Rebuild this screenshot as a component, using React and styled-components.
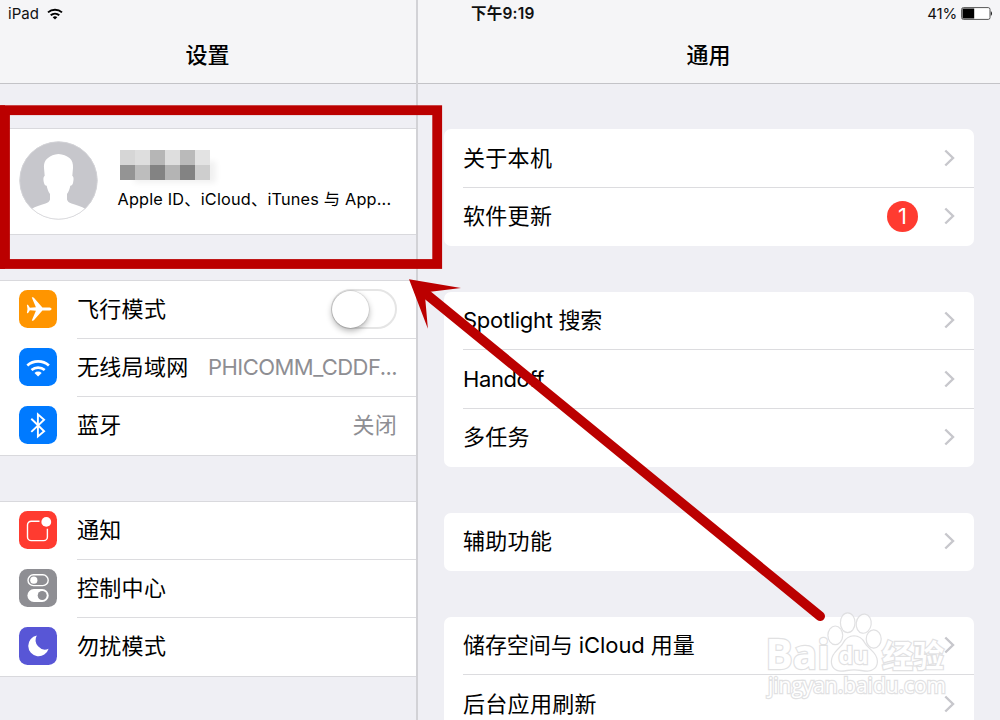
import React from "react";
import styled, { createGlobalStyle } from "styled-components";

const SIDE_GROUPS = [
  [
    { icon: "plane", color: "#ff9500", label: "飞行模式", toggle: true },
    { icon: "wifi", color: "#007aff", label: "无线局域网", value: "PHICOMM_CDDF...", spacing: -0.55 },
    { icon: "bluetooth", color: "#007aff", label: "蓝牙", value: "关闭" },
  ],
  [
    { icon: "notice", color: "#ff3b30", label: "通知" },
    { icon: "control", color: "#8e8e93", label: "控制中心" },
    { icon: "moon", color: "#5856d6", label: "勿扰模式" },
  ],
];

const MAIN_GROUPS = [
  [{ label: "关于本机" }, { label: "软件更新", badge: 1 }],
  [
    { label: "Spotlight 搜索", spacing: -0.3 },
    { label: "Handoff", spacing: -0.4 },
    { label: "多任务" },
  ],
  [{ label: "辅助功能" }],
  [{ label: "储存空间与 iCloud 用量", spacing: -0.07 }, { label: "后台应用刷新" }],
];

const MOSAIC = [
  "#d6d6d6", "#dedede", "#b6b6b6", "#dedede", "#bababa", "#e3e3e3",
  "#949494", "#bdbdbd", "#838383", "#b4b4b4", "#838383", "#cecece",
];

const ICONS = {
  plane: (
    <path
      fill="#fff"
      d="M12.800 7.500c.9-.5 1.700-.3 2.300.5l8.300 9.400 7.200.2c1.200.1 1.900.6 1.900 1.400s-.7 1.300-1.900 1.400l-7.200.2-8.300 9.400c-.6.800-1.400 1-2.300.5l4.100-9.800-6-.4-1.600 2.400c-.3.5-.8.600-1.400.4l.6-4.100-.6-4.100c.6-.2 1.100-.1 1.400.4l1.600 2.400 6-.4z"
    />
  ),
  wifi: (
    <g fill="none" stroke="#fff" strokeWidth="2.7">
      <path d="M8.300 17.400a16.300 16.300 0 0 1 21.600 0" />
      <path d="M12.500 22a10.200 10.200 0 0 1 13.200 0" />
      <path d="M15.500 24.900a5.200 5.200 0 0 1 7.200 0l-3.600 3.500z" fill="#fff" stroke="none" />
    </g>
  ),
  bluetooth: (
    <path
      d="M12.300 12.800l12.800 12.400-6.200 5.200V8.300l6.200 5.400-12.800 12.200"
      fill="none"
      stroke="#fff"
      strokeWidth="1.9"
    />
  ),
  notice: (
    <g>
      <path
        d="M20.500 10.200h-8.300a3.700 3.700 0 0 0-3.700 3.700v12a3.700 3.700 0 0 0 3.700 3.700h12.500a3.700 3.700 0 0 0 3.700-3.700v-8.200"
        fill="none"
        stroke="#fff"
        strokeWidth="1.4"
      />
      <circle cx="27.300" cy="10.900" r="4.900" fill="#fff" />
    </g>
  ),
  control: (
    <g>
      <rect x="9" y="5.800" width="20.200" height="10.800" rx="5.400" fill="none" stroke="#fff" strokeWidth="1.400" />
      <circle cx="14.800" cy="11.200" r="3.600" fill="#fff" />
      <rect x="8.400" y="20" width="21.300" height="13" rx="6.500" fill="#fff" />
      <circle cx="23.200" cy="26.500" r="4.500" fill="#8e8e93" />
    </g>
  ),
  moon: (
    <path
      d="M17.800 8.600a10.400 10.400 0 1 0 11.800 13.200 9.400 9.400 0 0 1-11.800-13.200z"
      fill="#fff"
    />
  ),
};

const Chevron = () => (
  <ChevronIcon viewBox="0 0 11 18">
    <path d="M1.300 1.500l7.700 7.500-7.700 7.500" />
  </ChevronIcon>
);

const Avatar = () => (
  <AvatarIcon viewBox="0 0 79 79">
    <clipPath id="face">
      <circle cx="39.500" cy="39.500" r="39" />
    </clipPath>
    <circle cx="39.500" cy="39.500" r="39" fill="#c7c7cc" />
    <g clipPath="url(#face)">
      <path
        fill="#fff"
        d="M39.500 13C35 13.300 31.500 15 29 17C25.500 19.500 24.800 23 25 27L25.700 35C24 35.500 24.300 39 25 42C25.500 44 26.500 44.800 27.700 44.700C28.300 48 29.300 50.500 31 53V58.500C30.500 60.500 29 61.500 26.500 62.500C21 64.500 16.500 65.500 12.500 68V79H66.500V68C62.500 65.500 58 64.500 52.500 62.500C50 61.500 48.500 60.500 48 58.500V53C49.700 50.500 50.700 48 51.300 44.700C52.500 44.800 53.500 44 54 42C54.700 39 55 35.500 53.300 35L54 27C54.200 23 53.500 19.500 50.500 17C47.500 15 44 13.300 39.500 13Z"
      />
    </g>
    <circle cx="39.500" cy="39.500" r="38.700" fill="none" stroke="#d4d4d8" strokeWidth=".8" />
  </AvatarIcon>
);

const Watermark = () => (
  <Mark>
    <ellipse cx="835.300" cy="635.300" rx="6.800" ry="8.700" />
    <ellipse cx="847.700" cy="622.700" rx="6.700" ry="9.300" />
    <ellipse cx="863.700" cy="623.700" rx="6.900" ry="9" transform="rotate(8 863.700 623.700)" />
    <ellipse cx="873.700" cy="639" rx="6.900" ry="8.600" />
    <path d="M854 636.500c5 0 8 2.500 10.500 7 3 5.500 12 9 12.300 17.500.2 6-4 9.500-9.300 9.500-4.500 0-8-1.200-13.500-1.200s-8.500 1.200-13 1.200c-5.500 0-9.300-3.800-9-9.500.4-8.500 8.500-12 11.500-17.500 2.500-4.500 5.500-7 10.500-7z" />
    <MarkText x="765.500" y="669" textLength="64" lengthAdjust="spacingAndGlyphs" size={41}>Bai</MarkText>
    <MarkText x="838.500" y="664" textLength="30" lengthAdjust="spacingAndGlyphs" size={23}>du</MarkText>
    <MarkText x="882" y="667" textLength="62" lengthAdjust="spacingAndGlyphs" size={31}>经验</MarkText>
    <MarkText x="768" y="693" textLength="178" lengthAdjust="spacingAndGlyphs" size={21} light>jingyan.baidu.com</MarkText>
  </Mark>
);

const App = () => {
  return (
    <Screen>
      <GlobalStyle />
      <Sidebar>
        <Header>
          <StatusBar>
            <span>iPad</span>
            <StatusWifi viewBox="0 0 16 12">
              <path d="M1 4.400a10.500 10.500 0 0 1 14 0M3.700 7.300a6.500 6.500 0 0 1 8.600 0" />
              <path d="M5.700 9.200a3.500 3.500 0 0 1 4.600 0L8 11.500z" fill="#000" stroke="none" />
            </StatusWifi>
          </StatusBar>
          <Title>设置</Title>
        </Header>
        <Profile>
          <Avatar />
          <ProfileText>
            <Mosaic>
              {MOSAIC.map((color, index) => (
                <Tile key={index} color={color} />
              ))}
            </Mosaic>
            <ProfileCaption>Apple ID、iCloud、iTunes 与 App...</ProfileCaption>
          </ProfileText>
        </Profile>
        {SIDE_GROUPS.map((group, index) => (
          <SideGroup key={index}>
            {group.map((item) => (
              <SideRow key={item.label}>
                <IconBox color={item.color}>
                  <svg width="38" height="38" viewBox="0 0 38 38">
                    {ICONS[item.icon]}
                  </svg>
                </IconBox>
                <SideBody>
                  <Label>{item.label}</Label>
                  {item.value && <Value spacing={item.spacing}>{item.value}</Value>}
                  {item.toggle && (
                    <Toggle>
                      <Knob />
                    </Toggle>
                  )}
                </SideBody>
              </SideRow>
            ))}
          </SideGroup>
        ))}
      </Sidebar>
      <Main>
        <Header>
          <StatusBar spread>
            <Clock>下午9:19</Clock>
            <Power>
              <span>41%</span>
              <Battery viewBox="0 0 31 13">
                <rect x=".6" y=".6" width="28.400" height="11.800" rx="1.800" fill="#fff" stroke="#555" />
                <rect x="1.500" y="1.500" width="11.700" height="10" />
                <path d="M29.800 4.300c1.400.4 1.400 4 0 4.400z" />
              </Battery>
            </Power>
          </StatusBar>
          <Title>通用</Title>
        </Header>
        <Cards>
          {MAIN_GROUPS.map((group, index) => (
            <Card key={index}>
              {group.map((item) => (
                <CardRow key={item.label}>
                  <Label spacing={item.spacing}>{item.label}</Label>
                  {item.badge && <Badge>{item.badge}</Badge>}
                  <Chevron />
                </CardRow>
              ))}
            </Card>
          ))}
        </Cards>
      </Main>
      <Overlay viewBox="0 0 1000 720">
        <Watermark />
        <rect x="5" y="110.200" width="432.200" height="153.800" fill="none" stroke="#b00" strokeWidth="9.800" />
        <rect x="0" y="105.300" width="5" height="163.600" fill="#b00" />
        <path d="M428 295.500L820.200 616.200" stroke="#b00" strokeWidth="9.600" strokeLinecap="round" />
        <path d="M409 279.300l52 8.700-30.500 3.700-5.200 7.600 2.600 29.500z" fill="#b00" />
      </Overlay>
    </Screen>
  );
};

export default App;

const GlobalStyle = createGlobalStyle`
  * {
    box-sizing: border-box;
  }
  body {
    margin: 0;
    overflow: hidden;
    font-family: Inter, "Noto Sans CJK SC", sans-serif;
    color: #000;
  }
  svg {
    display: block;
    flex-shrink: 0;
  }
`;

const Screen = styled.div`
  position: relative;
  display: flex;
  width: 1000px;
  height: 720px;
  overflow: hidden;
  background-color: #efeff4;
`;

const Sidebar = styled.div`
  width: 418px;
  border-right: 2px solid #d2d2d6;
`;

const Main = styled.div`
  flex: 1;
`;

const Header = styled.div`
  height: 84px;
  border-bottom: 1px solid #c3c3c7;
  background-color: #f5f5f7;
`;

const StatusBar = styled.div`
  display: flex;
  align-items: center;
  justify-content: ${(props) => (props.spread ? "space-between" : "flex-start")};
  gap: 8px;
  height: 27px;
  padding: ${(props) => (props.spread ? "0 8px 0 53px" : "0 8px")};
  line-height: 20px;
  font-size: 15px;
  color: #111;
`;

const StatusWifi = styled.svg`
  width: 16px;
  height: 12px;
  fill: none;
  stroke: #000;
  stroke-width: 1.9;
`;

const Clock = styled.span`
  font-size: 15.500px;
  font-weight: 600;
  letter-spacing: 0.2px;
`;

const Power = styled.div`
  display: flex;
  align-items: center;
  gap: 4px;
  letter-spacing: -0.2px;
`;

const Battery = styled.svg`
  width: 31px;
  height: 13px;
`;

const Title = styled.div`
  height: 56px;
  padding-right: 1px;
  line-height: 56px;
  font-size: 22px;
  font-weight: 500;
  text-align: center;
`;

const Profile = styled.div`
  display: flex;
  align-items: center;
  height: 107px;
  margin-top: 44px;
  padding: 0 19px 2px;
  border: solid #d9d9dd;
  border-width: 1px 0;
  background-color: #fff;
`;

const AvatarIcon = styled.svg`
  width: 79px;
  height: 79px;
`;

const ProfileText = styled.div`
  margin-left: 19.500px;
`;

const Mosaic = styled.div`
  display: grid;
  grid-template-columns: repeat(6, 15px);
  grid-auto-rows: 15px;
  width: 90px;
  margin-left: 2.500px;
  box-shadow: 10px 7px 6px -4px #f1f1f1;
`;

const Tile = styled.div`
  background-color: ${(props) => props.color};
`;

const ProfileCaption = styled.div`
  margin-top: 7px;
  line-height: 24px;
  font-size: 16.300px;
  letter-spacing: 0.18px;
  white-space: nowrap;
`;

const SideGroup = styled.div`
  margin-top: 45px;
  border: solid #d9d9dd;
  border-width: 1px 0;
  background-color: #fff;
`;

const SideRow = styled.div`
  display: flex;
  align-items: center;
  gap: 20px;
  height: 58px;
  padding-left: 19px;
`;

const IconBox = styled.div`
  width: 38px;
  height: 38px;
  margin-bottom: 3px;
  border-radius: 8.500px;
  background-color: ${(props) => props.color};
`;

const SideBody = styled.div`
  display: flex;
  flex: 1;
  align-items: center;
  justify-content: space-between;
  height: 100%;
  padding: 0 19px 1px 0;
  border-bottom: 1px solid #dcdcdf;
  ${SideRow}:last-child & {
    border-bottom-color: transparent;
  }
`;

const Label = styled.span`
  flex: 1;
  line-height: 30px;
  font-size: 22px;
  letter-spacing: ${(props) => props.spacing ?? 0.3}px;
  white-space: nowrap;
`;

const Value = styled.span`
  line-height: 30px;
  font-size: 22px;
  letter-spacing: ${(props) => props.spacing ?? 0.3}px;
  color: #8e8e93;
  white-space: nowrap;
`;

const Toggle = styled.div`
  width: 66px;
  height: 40px;
  border: 2px solid #e5e5e5;
  border-radius: 20px;
`;

const Knob = styled.div`
  width: 37px;
  height: 37px;
  margin: -0.5px 0 0 -1px;
  border-radius: 50%;
  background-color: #fff;
  box-shadow: 0 0 1px 0.5px rgba(0, 0, 0, 0.15), 0 3px 6px rgba(0, 0, 0, 0.3);
`;

const Cards = styled.div`
  display: flex;
  flex-direction: column;
  gap: 45.500px;
  padding: 45px 26px 0 25.500px;
`;

const Card = styled.div`
  padding-left: 19.500px;
  border-radius: 7px;
  background-color: #fff;
`;

const CardRow = styled.div`
  display: flex;
  align-items: center;
  height: 58.500px;
  padding-right: 19px;
  border-bottom: 1px solid #dcdcdf;
  &:last-child {
    border-bottom-color: transparent;
  }
`;

const Badge = styled.span`
  width: 31px;
  height: 31px;
  margin-right: 26px;
  border-radius: 50%;
  line-height: 31px;
  font-size: 22px;
  text-align: center;
  color: #fff;
  background-color: #ff3b30;
`;

const ChevronIcon = styled.svg`
  width: 11px;
  height: 18px;
  fill: none;
  stroke: #c7c7cc;
  stroke-width: 2.4;
`;

/* Annotation marks drawn over both panes */
const Overlay = styled.svg`
  position: absolute;
  top: 0;
  left: 0;
  width: 1000px;
  height: 720px;
`;

const Mark = styled.g`
  fill: #fff;
  stroke: #dcdcde;
  stroke-width: 2.4;
  paint-order: stroke;
  opacity: 0.85;
`;

const MarkText = styled.text`
  font-family: "Open Sans", "Noto Sans CJK SC", sans-serif;
  font-size: ${(props) => props.size}px;
  font-weight: ${(props) => (props.light ? 400 : 700)};
`;
